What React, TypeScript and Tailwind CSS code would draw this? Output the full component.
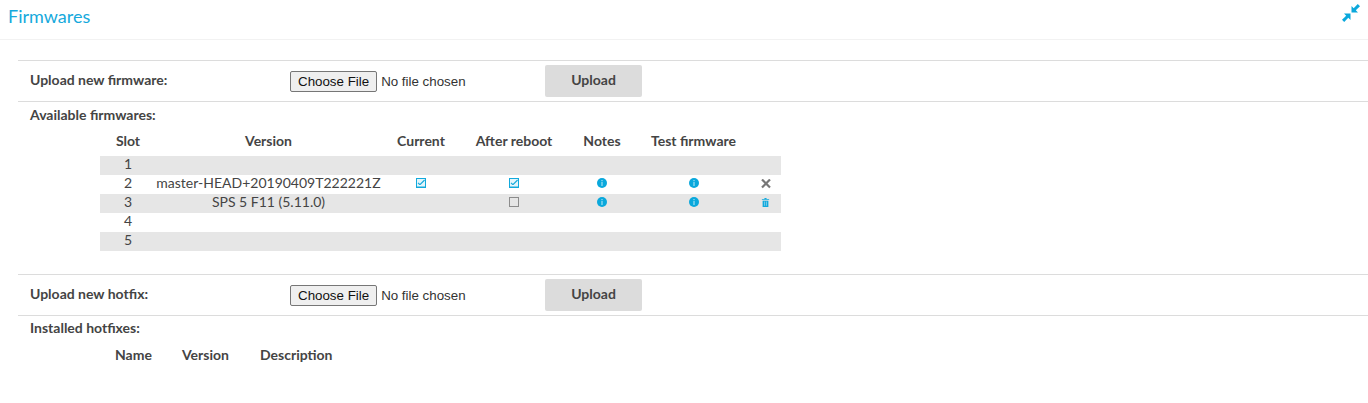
import type { ReactNode } from "react"

function UploadRow({ label }: { label: string }) {
  return (
    <div className="flex h-[42px] items-center border-y border-[#dcdcdc] pl-3">
      <label className="w-[260px] pb-[2px] text-sm font-bold text-[#444]">{label}</label>
      <input
        type="file"
        className="w-[255px] font-['Liberation_Sans',sans-serif] text-[13.333px] text-[#333] file:mr-[4px] file:h-[21px] file:rounded-[2px] file:border file:border-[#767676] file:bg-[#efefef] file:px-[7px] file:text-[#111]"
      />
      <button className="h-8 w-[97px] rounded-[2px] bg-[#dcdcdc] pb-[2px] text-sm font-bold text-[#444]">Upload</button>
    </div>
  )
}

function Icon({ size = 10, className = "mt-[3px]", children }: { size?: number; className?: string; children: ReactNode }) {
  return (
    <div className={className}>
      <svg viewBox="0 0 10 10" width={size} height={size} className="mx-auto block">
        {children}
      </svg>
    </div>
  )
}

function Checkbox({ checked }: { checked?: boolean }) {
  if (checked) {
    return (
      <Icon>
        <rect x="0.5" y="0.5" width="9" height="9" fill="#e3f5fb" stroke="#12a9dc" />
        <path d="M1 8h8v1H1z" fill="#7fd0ec" />
        <path d="M2 4.8l1.9 1.9L8.6 2" fill="none" stroke="#12a9dc" strokeWidth="1.1" />
        <path d="M3 7l1 1 1-1" fill="none" stroke="#fff" strokeWidth="0.8" />
      </Icon>
    )
  }
  return (
    <Icon>
      <rect x="0.5" y="0.5" width="9" height="9" fill="none" stroke="#8c8c8c" />
    </Icon>
  )
}

function InfoDot() {
  return (
    <Icon>
      <circle cx="5" cy="5" r="5" fill="#0aa8dc" />
      <rect x="4.4" y="2" width="1.2" height="1.2" fill="#9fdff3" />
      <rect x="4.4" y="4" width="1.2" height="4" fill="#9fdff3" />
    </Icon>
  )
}

const rows = [
  { slot: 1 },
  { slot: 2, version: "master-HEAD+20190409T222221Z", current: true, reboot: true, action: "remove" },
  { slot: 3, version: "SPS 5 F11 (5.11.0)", reboot: false, action: "delete" },
  { slot: 4 },
  { slot: 5 },
]

export default function App() {
  return (
    <div className="min-h-[403px] bg-white font-['Lato',sans-serif] text-[#444]">
      <header className="flex h-10 items-start justify-between border-b border-[#f2f2f2] pr-2 pl-2">
        <h1 className="pt-1 text-lg leading-6 text-[#16a9dc]">Firmwares</h1>
        <svg viewBox="0 0 18 18" className="mt-1 h-[18px] w-[18px] fill-[#0aa8dc]">
          <path d="M9.5 2v6.5H16l-2.2-2.2L18 2.2 15.8 0l-4.1 4.2zM8.5 16V9.5H2l2.2 2.2L0 15.8 2.2 18l4.1-4.2z" />
        </svg>
      </header>

      <main className="pt-5 pl-[18px]">
        <UploadRow label="Upload new firmware:" />
        <section className="h-[172px]">
          <h2 className="pt-1 pl-3 text-sm leading-[18px] font-bold">Available firmwares:</h2>
          <table className="mt-2 ml-[82px] w-[681px] table-fixed text-center text-sm">
            <colgroup>
              <col className="w-[56px]" />
              <col className="w-[225px]" />
              <col className="w-[80px]" />
              <col className="w-[106px]" />
              <col className="w-[70px]" />
              <col className="w-[113px]" />
              <col className="w-[31px]" />
            </colgroup>
            <thead>
              <tr className="h-6 align-top leading-[18px]">
                <th>Slot</th>
                <th>Version</th>
                <th>Current</th>
                <th>After reboot</th>
                <th>Notes</th>
                <th>Test firmware</th>
                <th></th>
              </tr>
            </thead>
            <tbody>
              {rows.map((row) => (
                <tr key={row.slot} className="h-[19px] align-top leading-[15px] odd:bg-[#e6e6e6]">
                  <td>{row.slot}</td>
                  <td className="whitespace-nowrap">{row.version}</td>
                  <td>{row.current && <Checkbox checked />}</td>
                  <td>{row.version && <Checkbox checked={row.reboot} />}</td>
                  <td>{row.version && <InfoDot />}</td>
                  <td>{row.version && <InfoDot />}</td>
                  <td>
                    {row.action === "remove" && (
                      <Icon className="mt-1">
                        <path d="M1 0.5l8 8M9 0.5l-8 8" stroke="#777" strokeWidth="2.2" />
                      </Icon>
                    )}
                    {row.action === "delete" && (
                      <Icon size={9} className="mt-1">
                        <path d="M3.8 0h2.4v1H9v1H1V1h2.8z" fill="#12a9dc" />
                        <path d="M1.8 3h6.4v7H1.8z" fill="#12a9dc" />
                        <path d="M3.5 4h1v4.5h-1zM5.5 4h1v4.5h-1z" fill="#7fd0ec" />
                      </Icon>
                    )}
                  </td>
                </tr>
              ))}
            </tbody>
          </table>
        </section>
        <UploadRow label="Upload new hotfix:" />
        <section>
          <h2 className="pt-[3px] pl-3 text-sm leading-[18px] font-bold">Installed hotfixes:</h2>
          <div className="mt-[9px] flex pl-[97px] text-sm leading-[18px] font-bold">
            <span className="w-[67px]">Name</span>
            <span className="w-[78px]">Version</span>
            <span>Description</span>
          </div>
        </section>
      </main>
    </div>
  )
}
